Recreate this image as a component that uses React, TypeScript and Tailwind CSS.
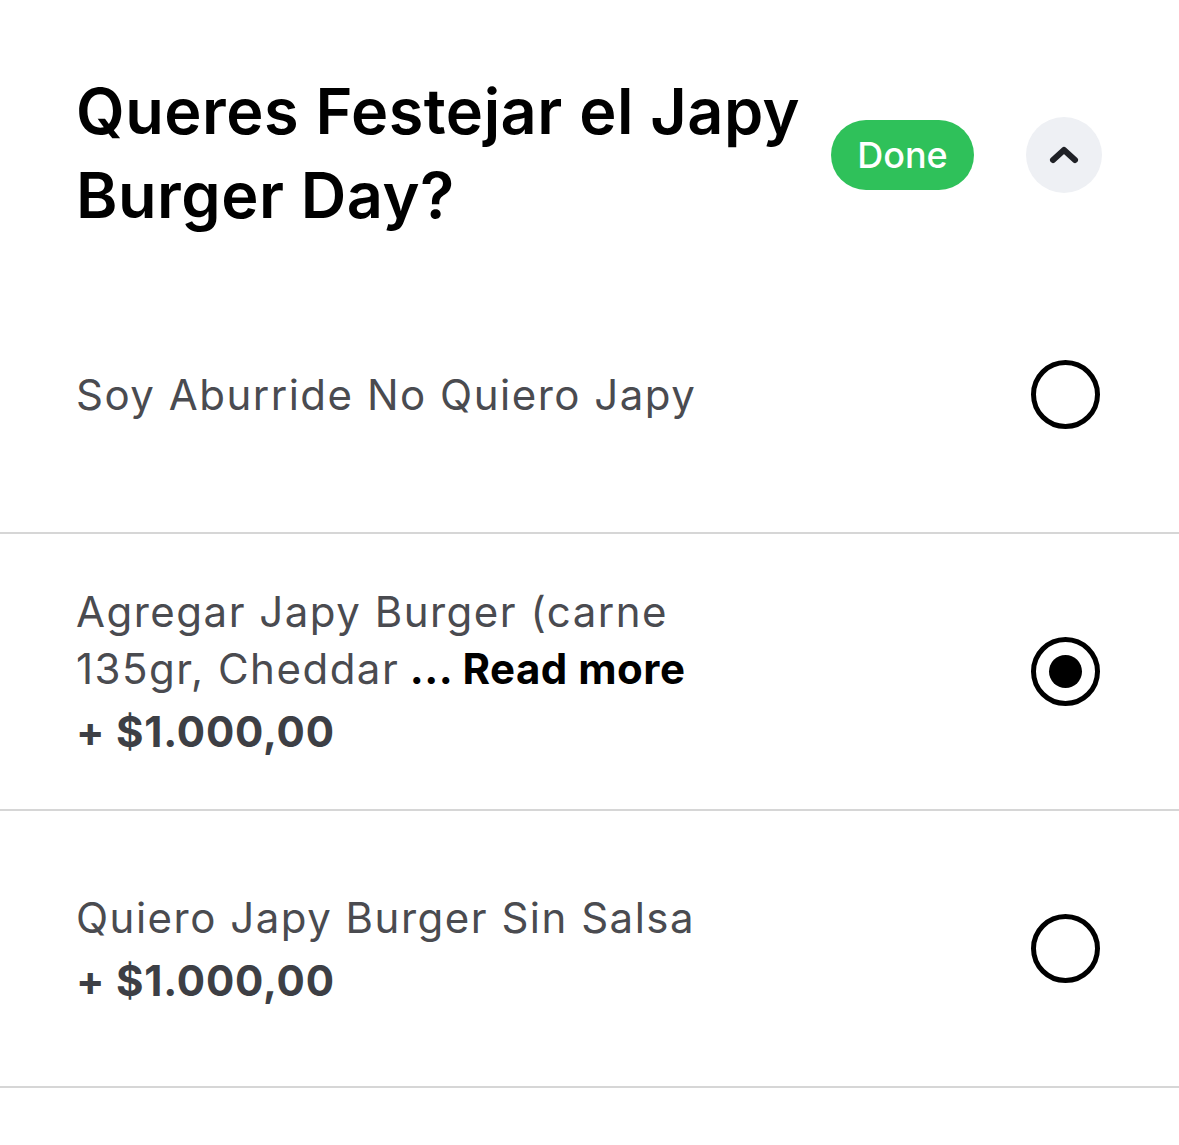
import React, { useState } from 'react';

interface Option {
  id: string;
  label: string;
  price?: string;
  truncated?: boolean;
}

const options: Option[] = [
  { id: 'none', label: 'Soy Aburride No Quiero Japy' },
  { id: 'full', label: 'Agregar Japy Burger (carne 135gr, Cheddar', price: '+ $1.000,00', truncated: true },
  { id: 'nosauce', label: 'Quiero Japy Burger Sin Salsa', price: '+ $1.000,00' },
];

const Radio: React.FC<{ checked: boolean }> = ({ checked }) => (
  <div className="w-[69px] h-[69px] rounded-full border-[5px] border-black flex items-center justify-center shrink-0">
    {checked && <div className="w-[33px] h-[33px] rounded-full bg-black" />}
  </div>
);

const App: React.FC = () => {
  const [selected, setSelected] = useState('full');

  return (
    <div className="w-[1179px] min-h-[1145px] bg-white font-['Inter',sans-serif]">
      {/* Header */}
      <div className="flex items-center pl-[76px] pr-[77px] pt-[69px] pb-[20px] h-[257px]">
        <h2 className="w-[750px] self-start text-[63px] leading-[84px] font-semibold text-black tracking-[0.5px]">
          Queres Festejar el Japy Burger Day?
        </h2>
        <div className="flex items-center ml-auto gap-[52px] self-start mt-[48px]">
          <span className="h-[70px] w-[143px] rounded-full bg-[#2fc15a] text-white text-[36px] font-medium flex items-center justify-center">
            Done
          </span>
          <button className="w-[76px] h-[76px] rounded-full bg-[#eef0f4] flex items-center justify-center">
            <svg width="32" height="20" viewBox="0 0 32 20" fill="none">
              <path d="M5 15 L16 5 L27 15" stroke="#1f2126" strokeWidth="6" strokeLinecap="round" strokeLinejoin="round" />
            </svg>
          </button>
        </div>
      </div>

      {/* Options */}
      {options.map((opt) => (
        <div
          key={opt.id}
          onClick={() => setSelected(opt.id)}
          className="flex items-center justify-between h-[277px] pl-[76px] pr-[79px] border-b-2 border-[#d6d6d6] cursor-pointer"
        >
          <div className="w-[680px] text-[42px] text-[#4a4b50]">
            <div className="leading-[57px] tracking-[1.5px]">
              {opt.label}
              {opt.truncated && (
                <span className="text-black font-bold tracking-[0.5px]"> ... Read more</span>
              )}
            </div>
            {opt.price && (
              <div className="mt-[6px] leading-[57px] font-bold tracking-[0.8px] text-[#3d3f45]">{opt.price}</div>
            )}
          </div>
          <Radio checked={selected === opt.id} />
        </div>
      ))}
    </div>
  );
};

export default App;
